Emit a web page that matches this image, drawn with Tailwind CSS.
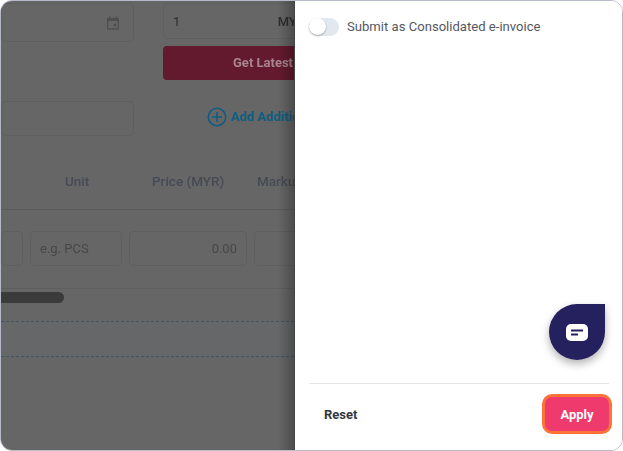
<!DOCTYPE html>
<html lang="en">
<head>
    <meta charset="UTF-8">
    <meta name="viewport" content="width=device-width, initial-scale=1.0">
    <title>Submit as Consolidated e-invoice</title>
    <script src="https://cdn.jsdelivr.net/npm/@tailwindcss/browser@4"></script>
</head>
<body class="bg-white font-['Roboto',sans-serif]">
    <div class="w-[623px] h-[451px] flex overflow-hidden rounded-[12px] border border-[#b7bac8] bg-white blur-[0.4px]">
        <!-- dimmed page behind the drawer -->
        <div class="relative w-[294px] h-full shrink-0 overflow-hidden bg-[#666666] border-r border-[#454545]">
            <div class="flex gap-[29px] pt-[2px] h-[100px]">
                <div class="w-[133px] h-[39px] shrink-0 flex items-center justify-end pr-[12px] rounded-[5px] border border-[#5f5f5f]">
                    <svg class="w-[16px] h-[16px]" viewBox="0 0 24 24" fill="#4d4f50"><path d="M19 4h-1V2h-2v2H8V2H6v2H5a2 2 0 0 0-2 2v14a2 2 0 0 0 2 2h14a2 2 0 0 0 2-2V6a2 2 0 0 0-2-2zm0 16H5V9h14v11zm-2-7h-4v4h4v-4z"/></svg>
                </div>
                <div class="w-[200px] shrink-0 flex flex-col gap-[7px]">
                    <div class="h-[36px] flex items-center justify-between pl-[9px] pr-[57px] pt-[1px] rounded-[5px] border border-[#5f5f5f] text-[13px] text-[#2e2e2e]">
                        <span>1</span>
                        <span class="font-medium whitespace-nowrap">MYR</span>
                    </div>
                    <div class="h-[34px] flex items-center pl-[70px] rounded-[4px] bg-[#641a2e] text-[13px] font-bold text-[#a8848e] whitespace-nowrap">Get Latest Rate</div>
                </div>
            </div>
            <div class="flex gap-[29px] h-[58px]">
                <div class="w-[133px] h-[35px] shrink-0 rounded-[5px] border border-[#5f5f5f]"></div>
                <div class="flex items-center gap-[4px] h-[31px] pl-[44px] text-[13px] font-bold text-[#0f5d82] whitespace-nowrap">
                    <svg class="w-[20px] h-[20px] shrink-0" viewBox="0 0 20 20" fill="none" stroke="#0f5d82" stroke-width="1.6"><circle cx="10" cy="10" r="8.7"/><path d="M10 5v10M5 10h10"/></svg>
                    <span>Add Additional</span>
                </div>
            </div>
            <div class="flex items-center h-[51px] pb-[6px] border-b border-[#5c5c5c] text-[13.5px] font-medium text-[#454a55] whitespace-nowrap">
                <span class="pl-[64px] w-[151px] shrink-0">Unit</span>
                <span class="w-[105px] shrink-0">Price (MYR)</span>
                <span class="shrink-0">Markup</span>
            </div>
            <div class="flex gap-[7px] h-[79px] items-start pt-[21px]">
                <div class="w-[22px] h-[35px] shrink-0 rounded-[4px] border border-[#5f5f5f]"></div>
                <div class="w-[92px] h-[35px] shrink-0 flex items-center pl-[9px] rounded-[4px] border border-[#5f5f5f] text-[13px] text-[#474747]">e.g. PCS</div>
                <div class="w-[118px] h-[35px] shrink-0 flex items-center justify-end pr-[9px] rounded-[4px] border border-[#5f5f5f] text-[13px] text-[#474747]">0.00</div>
                <div class="w-[60px] h-[35px] shrink-0 rounded-[4px] border border-[#5f5f5f]"></div>
            </div>
            <div class="border-t border-[#5f5f5f] -mt-[1px] pt-[3px] h-[33px]">
                <div class="w-[63px] h-[11px] rounded-r-full bg-[#3b3b3b]"></div>
            </div>
            <div class="h-[36px] border-y border-dashed border-[#3d5768] bg-[#656768]"></div>
            <!-- drawer shadow -->
            <div class="absolute inset-y-0 right-0 w-[16px] bg-gradient-to-r from-transparent to-black/25"></div>
        </div>
        <!-- drawer -->
        <div class="relative flex-1 flex flex-col h-full pl-[14px] pr-[13px] bg-white">
            <div class="flex gap-[8px] pt-[17px] h-[382px] items-start">
                <div class="relative w-[30px] h-[18px] shrink-0 rounded-full bg-[#e2e8f0]">
                    <div class="w-[17px] h-[17px] rounded-full bg-white shadow-[0_1px_2px_rgba(0,0,0,0.3)]"></div>
                </div>
                <span class="text-[13.1px] leading-[18px] text-[#55585f] whitespace-nowrap">Submit as Consolidated e-invoice</span>
            </div>
            <div class="border-t border-[#e6e6e6] flex items-center justify-between pl-[15px] pt-[10px]">
                <span class="pt-[1px] text-[13px] font-bold text-[#33373f]">Reset</span>
                <div class="w-[70px] h-[40px] -mr-[3px] pt-[1px] flex items-center justify-center rounded-[10px] border-[3px] border-[#fd7237] bg-[#ee3a6d] text-[13px] font-bold text-white">Apply</div>
            </div>
            <!-- chat button -->
            <div class="absolute left-[254px] top-[303px] w-[56px] h-[56px] pt-[1px] flex items-center justify-center rounded-full rounded-tr-[10px] bg-[#25215e] shadow-[0_4px_8px_rgba(0,0,0,0.3)]">
                <svg class="w-[22px] h-[17px]" viewBox="0 0 22 17"><rect width="22" height="17" rx="5" fill="#ffffff"/><path d="M5 6.5h12M5 10.5h7" stroke="#25215e" stroke-width="2"/></svg>
            </div>
        </div>
    </div>
</body>
</html>
